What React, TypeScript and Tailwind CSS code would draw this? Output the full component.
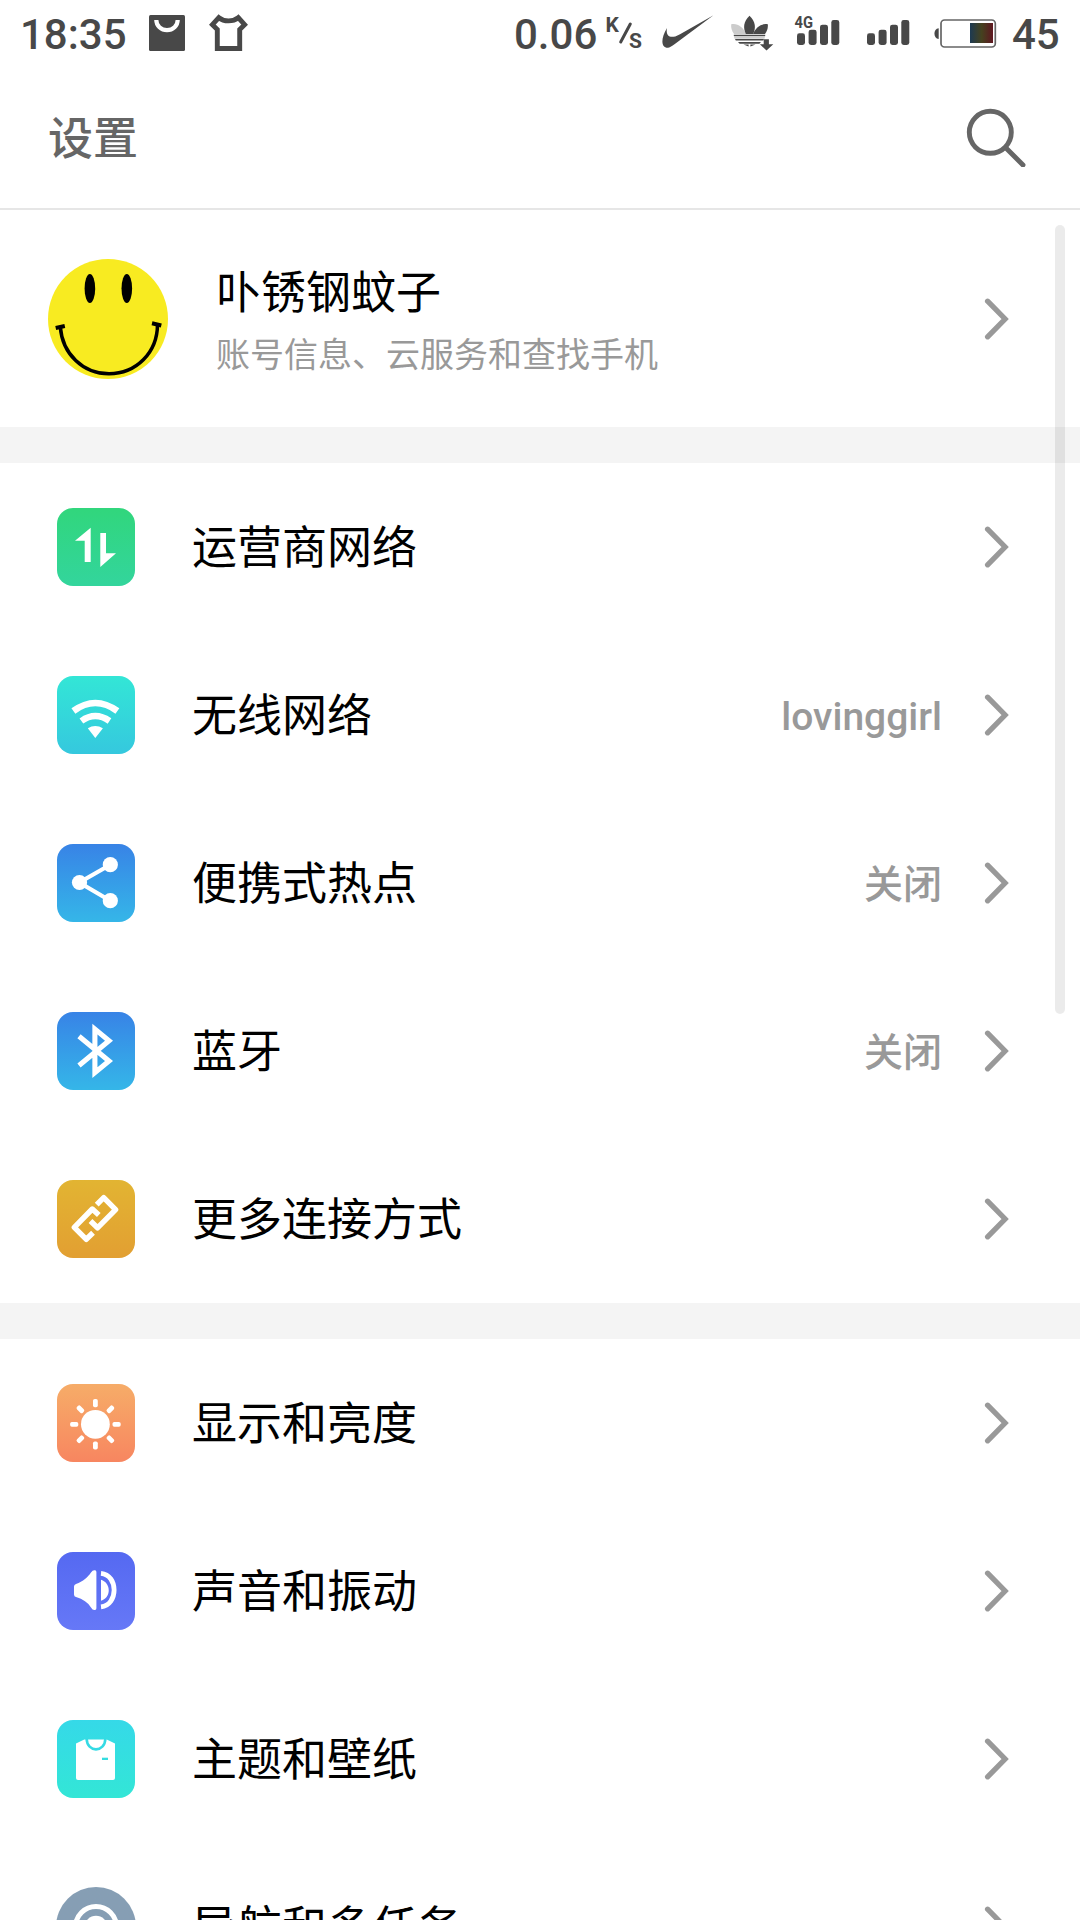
import React from "react";

type Glyph = React.ReactNode;

function Chevron() {
  return (
    <svg className="ml-auto h-[44px] w-[26px] shrink-0" viewBox="0 0 26 44" fill="none" stroke="#999" strokeWidth="5.3" strokeLinecap="round">
      <path d="M3.6 4.2 L21.1 22 L3.6 39.8" />
    </svg>
  );
}

function Bars({ x }: { x: number }) {
  return (
    <g fill="#484848">
      <rect x={x} y="33.3" width="8" height="11.7" rx="2.4" />
      <rect x={x + 11.6} y="29.7" width="8" height="15.3" rx="2.4" />
      <rect x={x + 23} y="24.7" width="8" height="20.3" rx="2.4" />
      <rect x={x + 34.3} y="20" width="8" height="25" rx="2.4" />
    </g>
  );
}

function StatusBar() {
  return (
    <div className="flex h-[66px] items-start text-[42px] leading-[70px] font-medium text-[#484848]">
      <span className="ml-[20px] w-[129px]">18:35</span>
      <svg className="h-[66px] w-[36px]" viewBox="149 0 36 66">
        <rect x="149" y="15" width="36" height="36" rx="1.5" fill="#484848" />
        <path d="M156.3 20 A10.7 10.2 0 0 0 177.7 20" fill="none" stroke="#fff" strokeWidth="4.2" />
      </svg>
      <svg className="ml-[23px] h-[66px] w-[42px]" viewBox="208 0 42 66">
        <path d="M218.8 17.6 C224 22 233 22 238.3 17.6 L244.6 24.7 L239.7 29.5 V48.5 H217.3 V29.5 L212.4 24.7 Z" fill="none" stroke="#484848" strokeWidth="4.9" />
      </svg>
      <span className="ml-[264px] w-[92px]">0.06</span>
      <svg className="h-[66px] w-[38px]" viewBox="606 0 38 66">
        <text x="605.5" y="32.3" fontSize="21" fontWeight="700" fill="#484848">K</text>
        <path d="M620.7 42 L630.3 24" stroke="#484848" strokeWidth="3" strokeLinecap="round" />
        <text x="629" y="48.3" fontSize="21" fontWeight="700" fill="#484848">S</text>
      </svg>
      <svg className="ml-[17px] h-[66px] w-[54px]" viewBox="661 0 54 66">
        <path d="M713.5 15.2 L674.5 44.3 C671 46.8 669.5 47.8 667.7 47.7 C661 47.5 660.5 39 667 28 C666 33 667.5 37.5 673.5 36.8 C676 36.4 678 35.4 680 34.2 Z" fill="#484848" />
      </svg>
      <svg className="ml-[15px] h-[66px] w-[44px]" viewBox="730 0 44 66" fill="#484848">
        <path d="M731.2 24.3 C737.5 23 743 27 746 33.9 H734 C731.8 31 730.8 28 731.2 24.3" fill="#ccc" />
        <path d="M767.8 24.3 C761.5 23 756 27 753 33.9 H765 C767.2 31 768.2 28 767.8 24.3" />
        <path d="M749.5 15.8 C743.3 21.5 743 28 745.8 33.9 H753.2 C756 28 755.7 21.5 749.5 15.8" />
        <path d="M733.8 34.8 H765.2 V36.1 H733.8 Z" />
        <path d="M733.8 36.1 H765.2 L764.4 38.7 H734.6 Z" fill="#ccc" />
        <path d="M735 38.9 H764 L763.2 40.6 H735.8 Z M738 42 H761 L759.4 43.8 H739.6 Z M743.5 44.5 H748.6 V46.4 Z M750.4 44.5 H755.5 L750.4 46.4 Z" />
        <path d="M763.7 39.3 H768.9 V44.3 H773.3 L766.5 50.6 L759.9 44.3 H763.7 Z" />
      </svg>
      <svg className="ml-[20px] h-[66px] w-[46px]" viewBox="794 0 46 66">
        <text x="794.6" y="28" fontSize="16" fontWeight="700" textLength="18.5" lengthAdjust="spacingAndGlyphs" fill="#484848">4G</text>
        <Bars x={797} />
      </svg>
      <svg className="ml-[27px] h-[66px] w-[43px]" viewBox="867 0 43 66">
        <Bars x={867} />
      </svg>
      <svg className="ml-[23px] h-[66px] w-[65px]" viewBox="933 0 65 66">
        <defs>
          <linearGradient id="charge">
            <stop offset="0" stopColor="#1d3a52" />
            <stop offset="0.5" stopColor="#45421f" />
            <stop offset="1" stopColor="#5e1620" />
          </linearGradient>
        </defs>
        <path d="M938.7 28.3 V39 C933 39 933 28.3 938.7 28.3" fill="#484848" />
        <rect x="941" y="20" width="54.3" height="27" rx="3.5" fill="none" stroke="#666" strokeWidth="1.7" />
        <rect x="970" y="23" width="23" height="20" fill="url(#charge)" />
      </svg>
      <span className="ml-[14px]">45</span>
    </div>
  );
}

function Header() {
  return (
    <header className="flex h-[144px] items-center border-b-2 border-[#e6e6e6] pr-[54px] pl-[48px]">
      <h1 className="pt-[6px] text-[45px] leading-[60px] font-medium text-[#666]">设置</h1>
      <svg className="ml-auto h-[60px] w-[60px]" viewBox="966 107 60 60" fill="none" stroke="#666" strokeWidth="4.9" strokeLinecap="round">
        <circle cx="990.3" cy="132.3" r="21" />
        <path d="M1006 148 L1023 165" />
      </svg>
    </header>
  );
}

function Profile() {
  return (
    <section className="flex h-[217px] items-center pr-[70px] pl-[48px]">
      <svg className="h-[120px] w-[120px]" viewBox="48 259 120 120">
        <circle cx="108" cy="319" r="60" fill="#f8eb21" />
        <ellipse cx="89.9" cy="288.4" rx="5.3" ry="14.5" />
        <ellipse cx="126.8" cy="288.4" rx="5.3" ry="14.5" />
        <g fill="none" stroke="#000" strokeWidth="3.5">
          <path d="M60.3 327 C62.5 354 83 373.8 109 373.8 C136 373.8 157.3 353 157.5 324.5" />
          <path d="M55.7 328 L64.8 326 M152 323.3 L161.3 325.5" strokeWidth="4" />
        </g>
      </svg>
      <div className="ml-[48px] pt-[9px]">
        <div className="text-[45px] leading-[64px] text-black">卟锈钢蚊子</div>
        <div className="text-[34px] leading-[59px] text-[#999]">账号信息、云服务和查找手机</div>
      </div>
      <Chevron />
    </section>
  );
}

interface Item {
  label: string;
  value?: string;
  tile: string;
  glyph: Glyph;
}

const connections: Item[] = [
  {
    label: "运营商网络",
    tile: "rounded-[16px] from-[#31d67c] to-[#33d59c]",
    glyph: <path d="M33.7 19.7 V54 H27.7 V32.7 H18 Z M43.3 25 H49 V45.3 H59 L43.3 59 Z" fill="#fff" />,
  },
  {
    label: "无线网络",
    value: "lovinggirl",
    tile: "rounded-[16px] from-[#33e6d6] to-[#35c8de]",
    glyph: (
      <g fill="none" stroke="#fff">
        <path d="M16.4 35 Q38.3 19 60.4 35" strokeWidth="6.6" />
        <path d="M24.4 45 Q38.3 35.2 52.5 45" strokeWidth="6.4" />
        <path d="M30.8 52.3 Q38.3 47.6 45.9 52.3 L38.3 62 Z" fill="#fff" stroke="none" />
      </g>
    ),
  },
  {
    label: "便携式热点",
    value: "关闭",
    tile: "rounded-[16px] from-[#3883e6] to-[#35b6e8]",
    glyph: (
      <g fill="#fff">
        <path d="M53.3 20.7 L22.3 38.5 L53.3 56.7" fill="none" stroke="#fff" strokeWidth="4.2" />
        <circle cx="53.3" cy="20.7" r="7.6" />
        <circle cx="22.5" cy="38.5" r="7.6" />
        <circle cx="53.3" cy="56.7" r="7.6" />
      </g>
    ),
  },
  {
    label: "蓝牙",
    value: "关闭",
    tile: "rounded-[16px] from-[#3883e6] to-[#35b6e8]",
    glyph: (
      <path d="M22 24.3 L52 49 L37.9 60.6 V17.1 L52 28.7 L22 53.5" fill="none" stroke="#fff" strokeWidth="5.1" />
    ),
  },
  {
    label: "更多连接方式",
    tile: "rounded-[16px] from-[#e2b432] to-[#e29f32]",
    glyph: (
      <g fill="none" stroke="#fff" strokeWidth="5.4" strokeLinejoin="round">
        <path d="M41.8 35 L35.3 29 L17.3 47.3 L29.3 59.3 L36 52.8" />
        <path d="M33.5 41 L40.5 47.8 L58.6 29.6 L46.7 17.6 L39.7 24.6" />
      </g>
    ),
  },
];

const rays = [0, 45, 90, 135, 180, 225, 270, 315];

const device: Item[] = [
  {
    label: "显示和亮度",
    tile: "rounded-[16px] from-[#f6ac68] to-[#f78660]",
    glyph: (
      <g fill="#fff">
        <circle cx="38.4" cy="40.3" r="14.4" />
        {rays.map((a) => (
          <rect key={a} x="36" y="15" width="4.8" height="8.2" rx="1.8" transform={`rotate(${a} 38.4 40.3)`} />
        ))}
      </g>
    ),
  },
  {
    label: "声音和振动",
    tile: "rounded-[16px] from-[#5569f1] to-[#6678f7]",
    glyph: (
      <g fill="#fff">
        <path d="M17 34.5 Q17 32.5 19 32 C26 29.5 31 25 34 20.5 Q35.5 18.3 37.3 18.3 H38 Q39.4 18.3 39.4 20 V56.3 Q39.4 58 38 58 H37.3 Q35.5 58 34 55.5 C31 50.5 26 47 19 45 Q17 44.5 17 42.5 Z" />
        <path d="M44 27.8 C54.3 31 54.3 45.8 44 48.8 Z" />
        <path d="M44 21.3 C61.5 23 61.5 53 44 54.8" fill="none" stroke="#fff" strokeWidth="4.8" />
      </g>
    ),
  },
  {
    label: "主题和壁纸",
    tile: "rounded-[16px] from-[#35d9e8] to-[#33e6d6]",
    glyph: (
      <>
        <path d="M19 23.5 L27.3 19.6 H49.7 L58 23.5 V58 Q58 60 56 60 H21 Q19 60 19 58 Z" fill="#fff" />
        <path d="M29.6 18.5 C30 33 48 33 48.4 18.5" fill="none" stroke="#35dae4" strokeWidth="2.6" />
        <rect x="45" y="37.7" width="6" height="2.3" fill="#34dde0" />
      </>
    ),
  },
  {
    label: "导航和多任务",
    tile: "rounded-full from-[#869eb4] to-[#869eb4] scale-[1.026]",
    glyph: (
      <>
        <circle cx="39" cy="39" r="20" fill="none" stroke="#fff" strokeWidth="4.9" />
        <circle cx="39" cy="39" r="11" fill="#fff" />
      </>
    ),
  },
];

function Row({ label, value, tile, glyph }: Item) {
  return (
    <div className="flex h-[168px] items-center pr-[70px] pl-[57px]">
      <svg className={`h-[78px] w-[78px] shrink-0 bg-linear-to-b ${tile}`} viewBox="0 0 78 78">
        {glyph}
      </svg>
      <span className="ml-[57px] pt-[4px] text-[45px] leading-[66px] text-black">{label}</span>
      <div className="ml-auto flex items-center gap-[42px]">
        {value && <span className="pt-[4px] text-[39px] leading-[58px] font-medium text-[#999]">{value}</span>}
        <Chevron />
      </div>
    </div>
  );
}

export default function App() {
  return (
    <main className="relative h-[1920px] w-[1080px] overflow-hidden bg-white font-['Roboto','Noto_Sans_CJK_SC',sans-serif]">
      <StatusBar />
      <Header />
      <Profile />
      <div className="h-[36px] bg-[#f4f4f4]" />
      {connections.map((item) => (
        <Row key={item.label} {...item} />
      ))}
      <div className="h-[36px] bg-[#f4f4f4]" />
      {device.map((item) => (
        <Row key={item.label} {...item} />
      ))}
      <div className="absolute top-[225px] right-[15px] h-[789px] w-[10px] rounded-full bg-black/8" />
    </main>
  );
}
